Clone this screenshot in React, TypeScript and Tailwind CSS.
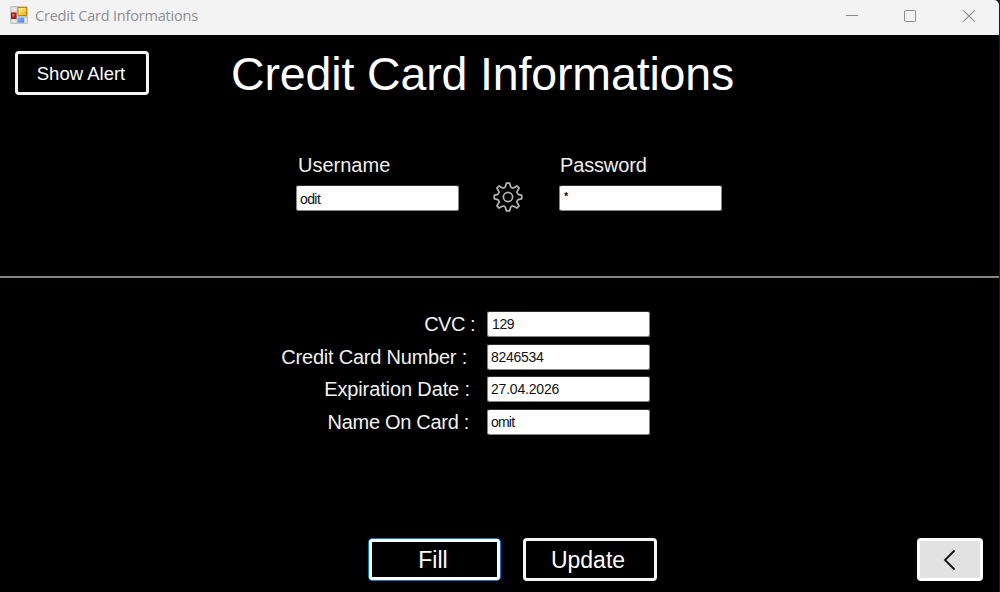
import React from "react";

function FormIcon() {
  return (
    <svg className="block h-[18px] w-[18px] shrink-0" viewBox="0 0 18 18">
      <defs>
        <linearGradient id="gold" x1="0" y1="0" x2="1" y2="1">
          <stop offset="0" stopColor="#fff2a0" />
          <stop offset="1" stopColor="#eeb000" />
        </linearGradient>
        <linearGradient id="sky" x1="0" y1="0" x2="1" y2="1">
          <stop offset="0" stopColor="#8fc0ff" />
          <stop offset="1" stopColor="#3d7fe0" />
        </linearGradient>
      </defs>
      <rect x="0" y="0" width="18" height="18" rx="1" fill="#c6c6c6" />
      <rect x="1.5" y="1.5" width="5" height="4" fill="#e6e6e6" />
      <rect x="1.5" y="13.5" width="5" height="3" fill="#e6e6e6" />
      <rect x="14.5" y="12" width="2.5" height="4.5" fill="#e6e6e6" />
      <rect x="1" y="6.5" width="5.5" height="6.5" fill="#a81f1f" />
      <rect x="2.3" y="8" width="2.2" height="2.5" fill="#e06a60" />
      <rect x="7.5" y="1" width="9.5" height="9" fill="#bd8a10" />
      <rect x="8.5" y="2" width="7.5" height="7" fill="url(#gold)" />
      <rect x="7.5" y="11.5" width="6.5" height="5" fill="url(#sky)" />
    </svg>
  );
}

function GearIcon() {
  return (
    <svg className="block h-[30px] w-[30px]" viewBox="0 0 30 30" fill="none" stroke="#b4b4b4" strokeWidth="1.7" strokeLinejoin="round">
      <path d="M13.4 1.2H16.6L17.6 4.6Q18.2 5.7 19.3 5.9Q20.3 6.2 21.3 5.5L23.9 3.9L26.1 6.1L24.5 8.7Q23.8 9.7 24.1 10.7Q24.3 11.8 25.4 12.4L28.8 13.4V16.6L25.4 17.6Q24.3 18.2 24.1 19.3Q23.8 20.3 24.5 21.3L26.1 23.9L23.9 26.1L21.3 24.5Q20.3 23.8 19.3 24.1Q18.2 24.3 17.6 25.4L16.6 28.8H13.4L12.4 25.4Q11.8 24.3 10.7 24.1Q9.7 23.8 8.7 24.5L6.1 26.1L3.9 23.9L5.5 21.3Q6.2 20.3 5.9 19.3Q5.7 18.2 4.6 17.6L1.2 16.6V13.4L4.6 12.4Q5.7 11.8 5.9 10.7Q6.2 9.7 5.5 8.7L3.9 6.1L6.1 3.9L8.7 5.5Q9.7 6.2 10.7 5.9Q11.8 5.7 12.4 4.6Z" />
      <circle cx="15" cy="15" r="4.6" />
    </svg>
  );
}

function Field({ value, className }: { value: string; className: string }) {
  return (
    <div className="flex h-[26px] w-[163px] items-center rounded-[2px] border border-t-[#303030] border-r-[#858585] border-b-[#858585] border-l-[#858585] bg-white bg-clip-padding text-[14px] leading-none text-[#111]">
      <span className={className}>{value}</span>
    </div>
  );
}

const rows = [
  { label: "CVC :", value: "129", labelClass: "mr-[12px] tracking-[-0.5px]", valueClass: "ml-[4px] tracking-[-0.4px]" },
  { label: "Credit Card Number :", value: "8246534", labelClass: "mr-[20px] tracking-[-0.22px]", valueClass: "ml-[3px] tracking-[-0.3px]" },
  { label: "Expiration Date :", value: "27.04.2026", labelClass: "mr-[17px] tracking-[-0.12px]", valueClass: "ml-[3px] tracking-[-0.2px]" },
  { label: "Name On Card :", value: "omit", labelClass: "mr-[18px] tracking-[-0.3px]", valueClass: "ml-[3px] tracking-[-0.8px]" },
];

export default function App() {
  return (
    <div className="flex h-[592px] w-[1000px] flex-col overflow-hidden whitespace-nowrap border-r border-[#1c1d22] bg-black font-['Liberation_Sans',Arial,sans-serif] text-white">
      <header className="flex h-[35px] shrink-0 items-center rounded-tr-[5px] bg-[#f3f3f3] pl-[10px]">
        <div className="mb-[5px]">
          <FormIcon />
        </div>
        <span className="mb-[3px] ml-[7px] font-['Open_Sans','Noto_Sans',sans-serif] text-[14.5px] leading-5 tracking-[-0.2px] text-[#8f8f8f]">
          Credit Card Informations
        </span>
        <svg className="ml-auto mr-[23px] block h-[35px] w-[131px]" viewBox="0 0 131 35" fill="none" stroke="#8c8c8c">
          <path d="M1 15.5H13" />
          <rect x="59.5" y="10.5" width="11" height="11" rx="1" />
          <path d="M118.3 10.3L129.7 21.7M129.7 10.3L118.3 21.7" strokeWidth="1.1" />
        </svg>
      </header>

      <section className="flex h-[110px] shrink-0 items-start pl-[15px] pt-4">
        <button className="flex h-[44px] w-[134px] items-center justify-center rounded-[4px] border-[3px] border-[#f5f5f5] pr-[2px] pt-[2px] text-[18.5px] leading-none">
          Show Alert
        </button>
        <h1 className="ml-[82px] mt-px text-[46.5px] leading-[44px] tracking-[-0.14px]">Credit Card Informations</h1>
      </section>

      <section className="flex h-[131px] shrink-0 pl-[296px] pt-[9px]">
        <div className="w-[164px]">
          <div className="h-[31px] pl-[2px] text-[20px] leading-[23px] text-[#eee]">Username</div>
          <Field value="odit" className="ml-[3px] mt-[2px] tracking-[-0.6px]" />
        </div>
        <div className="ml-[33px] mt-[28px]">
          <GearIcon />
        </div>
        <div className="ml-[36px] w-[163px]">
          <div className="h-[31px] pl-px text-[20px] leading-[23px] tracking-[-0.15px] text-[#eee]">Password</div>
          <Field value="*" className="mb-[3px] ml-[4px] text-[11px] font-bold" />
        </div>
      </section>

      <div className="h-[2px] w-full shrink-0 bg-[repeating-linear-gradient(90deg,#8c8c8c_0px,#94816e_2px,#6e8496_4px)]" />

      <section className="flex h-[227px] shrink-0 flex-col gap-[6.5px] pt-[33px]">
        {rows.map((row) => (
          <div key={row.label} className="flex h-[26px] items-center">
            <div className="flex w-[487px] justify-end text-[20px] leading-6 text-[#f2f2f2]">
              <span className={row.labelClass}>{row.label}</span>
            </div>
            <Field value={row.value} className={row.valueClass} />
          </div>
        ))}
      </section>

      <footer className="flex pl-[368px] pt-[33px]">
        <button className="flex h-[43px] w-[133px] items-center justify-center rounded-[4px] border border-[#0078d4]">
          <span className="flex h-full w-full items-center justify-center rounded-[3px] border-[3px] border-white pr-[3px] pt-[2px] text-[23px] leading-none">Fill</span>
        </button>
        <button className="ml-[22px] flex h-[43px] w-[134px] items-center justify-center rounded-[4px] border-[3px] border-[#f5f5f5] pr-[4px] pt-px text-[23px] leading-none">
          Update
        </button>
        <button className="ml-[260px] flex h-[43px] w-[66px] items-center justify-center rounded-[4px] border-[3px] border-white bg-[#e2e2e2]">
          <svg className="mr-px block h-[22px] w-[14px]" viewBox="0 0 14 22" fill="none" stroke="#151515" strokeWidth="1.9">
            <path d="M11.5 1.5L2 11L11.5 20.5" />
          </svg>
        </button>
      </footer>
    </div>
  );
}
